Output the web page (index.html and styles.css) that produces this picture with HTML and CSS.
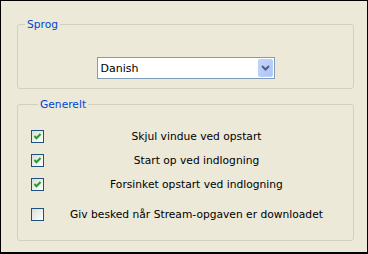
FILE: index.html
```html
<!DOCTYPE html>
<html lang="da">
<head>
	<meta charset="UTF-8">
	<title>Indstillinger</title>
	<link rel="stylesheet" href="styles.css">
</head>
<body>
	<div class="window">
		<fieldset class="group group_lang">
			<legend>Sprog</legend>
			<div class="combo">
				<span class="combo_text">Danish</span>
				<span class="combo_btn">
					<svg width="9" height="6" viewBox="0 0 9 6"><path d="M1 1 L4.5 4.5 L8 1" fill="none" stroke="#4d6185" stroke-width="2"/></svg>
				</span>
			</div>
		</fieldset>
		<fieldset class="group group_general">
			<legend>Generelt</legend>
			<ul class="opts">
				<li>
					<span class="chk"><svg width="11" height="11" viewBox="0 0 11 11"><path d="M2.5 5 L4.5 7.2 L8.5 3" fill="none" stroke="#21a121" stroke-width="2"/></svg></span>
					<span class="lbl">Skjul vindue ved opstart</span>
				</li>
				<li>
					<span class="chk"><svg width="11" height="11" viewBox="0 0 11 11"><path d="M2.5 5 L4.5 7.2 L8.5 3" fill="none" stroke="#21a121" stroke-width="2"/></svg></span>
					<span class="lbl">Start op ved indlogning</span>
				</li>
				<li>
					<span class="chk"><svg width="11" height="11" viewBox="0 0 11 11"><path d="M2.5 5 L4.5 7.2 L8.5 3" fill="none" stroke="#21a121" stroke-width="2"/></svg></span>
					<span class="lbl">Forsinket opstart ved indlogning</span>
				</li>
				<li class="last">
					<span class="chk"></span>
					<span class="lbl">Giv besked når Stream-opgaven er downloadet</span>
				</li>
			</ul>
		</fieldset>
	</div>
</body>
</html>
```
FILE: styles.css
```css
body, ul, li, fieldset, legend {
	margin: 0;
	padding: 0;
}
ul {
	list-style: none;
}
body {
	font-family: "DejaVu Sans", "Liberation Sans", sans-serif;
	font-size: 10.7px;
	color: #000;
}
.window {
	width: 368px;
	height: 254px;
	box-sizing: border-box;
	border: 1px solid #000;
	border-bottom-width: 2px;
	background: #ece9d8;
	padding: 17px 0 0 16px;
}
.group {
	width: 337px;
	box-sizing: border-box;
	border: 1px solid #d0d0bf;
	border-radius: 3px;
}
.group legend {
	margin-left: 7px;
	padding: 0 2px;
	line-height: 13px;
	height: 13px;
	color: #0046d5;
}
.group_lang {
	padding: 26px 0 9px;
	display: flex;
	justify-content: center;
}
.combo {
	width: 178px;
	height: 22px;
	box-sizing: border-box;
	border: 1px solid #7f9db9;
	background: #fff;
	display: flex;
	align-items: center;
	justify-content: space-between;
}
.combo_text {
	padding-left: 3px;
	font-size: 11px;
}
.combo_btn {
	width: 15px;
	height: 18px;
	margin-right: 1px;
	box-sizing: border-box;
	border: 1px solid #b9cef8;
	border-radius: 2px;
	background: linear-gradient(to bottom right, #c6d6fc, #aec4f4);
	display: flex;
	align-items: center;
	justify-content: center;
}
.group_general {
	margin-top: 9px;
	padding: 19px 8px 19px 13px;
}
.opts li {
	display: flex;
	align-items: center;
	height: 13px;
	line-height: 13px;
	margin-bottom: 11px;
}
.opts li.last {
	margin-top: 17px;
	margin-bottom: 0;
}
.chk {
	width: 13px;
	height: 13px;
	box-sizing: border-box;
	border: 1px solid #1c5180;
	background: linear-gradient(to bottom right, #dcdcd7, #fff);
	display: flex;
}
.lbl {
	flex: 1;
	margin-left: 4px;
	text-align: center;
}
```
